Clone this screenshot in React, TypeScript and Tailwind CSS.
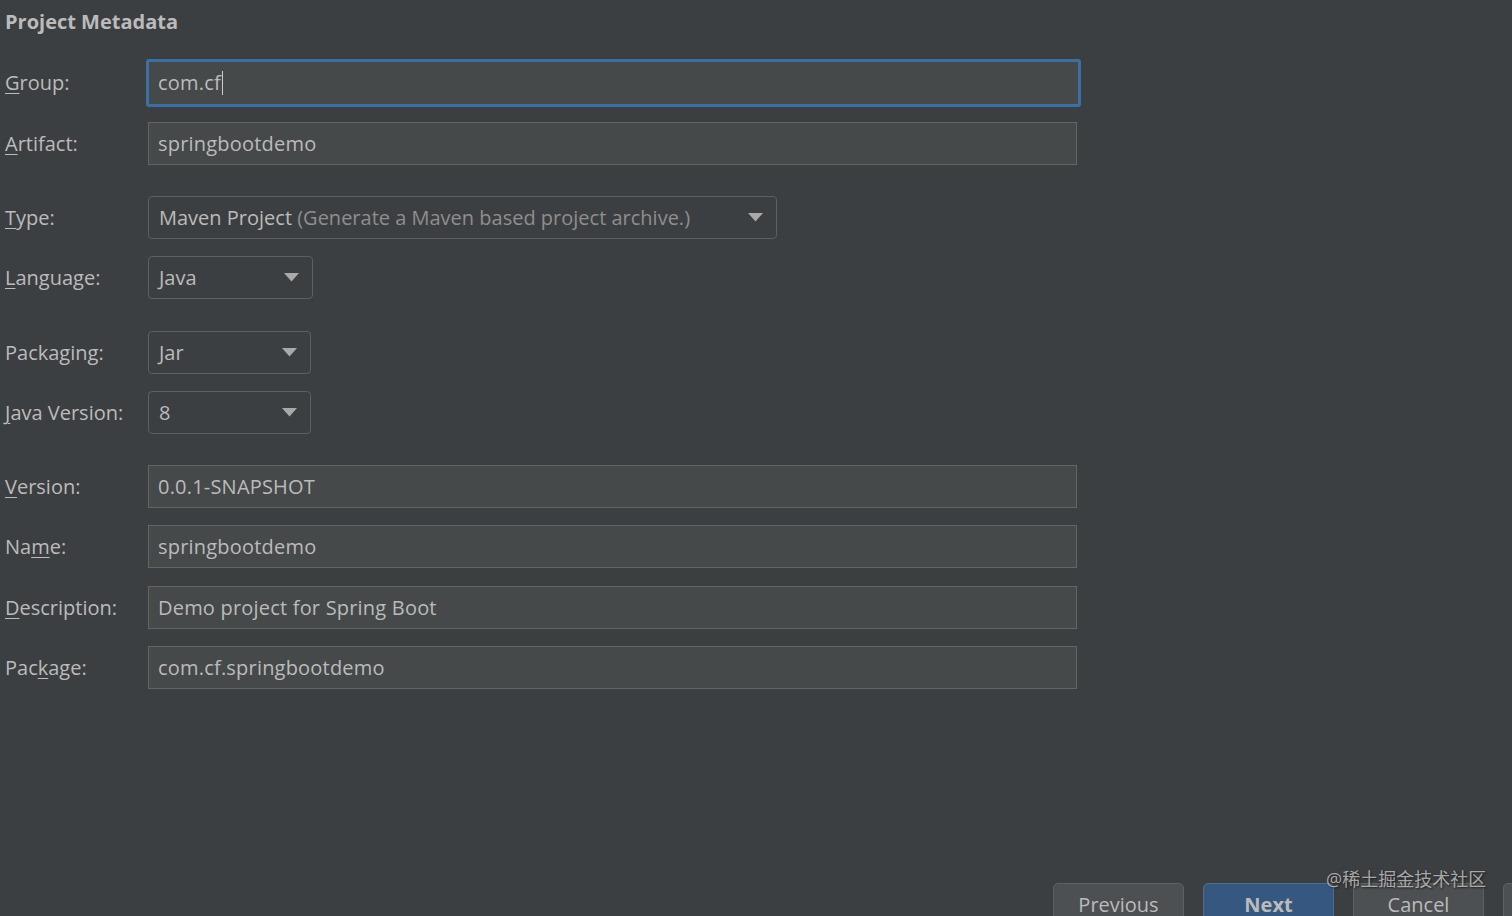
import React from "react";

const font = { fontFamily: '"Open Sans", "Noto Sans", "Noto Sans CJK SC", sans-serif' };

function Label({ text, mn }: { text: string; mn: number }) {
  return (
    <div className="w-[143px] shrink-0 pl-[5px] text-[20px] text-[#bbbbbb]">
      {text.slice(0, mn)}
      <span className="underline decoration-1 underline-offset-[3px]">{text[mn]}</span>
      {text.slice(mn + 1)}
    </div>
  );
}

function Arrow() {
  return (
    <svg width="15" height="9" viewBox="0 0 15 9" className="shrink-0">
      <path d="M0 0 H15 L7.5 8.5 Z" fill="#a9a9a9" />
    </svg>
  );
}

function TextRow({ label, mn, value, className = "" }: { label: string; mn: number; value: string; className?: string }) {
  return (
    <div className={`flex h-[43px] items-center ${className}`}>
      <Label text={label} mn={mn} />
      <div className="ml-[5px] flex h-[43px] w-[929px] items-center border border-[#646464] bg-[#45494a] pl-[9px] text-[20px] tracking-[0.2px] text-[#bbbbbb]">
        {value}
      </div>
    </div>
  );
}

function SelectRow({
  label,
  mn,
  width,
  className = "",
  children,
}: {
  label: string;
  mn: number;
  width: string;
  className?: string;
  children: React.ReactNode;
}) {
  return (
    <div className={`flex h-[43px] items-center ${className}`}>
      <Label text={label} mn={mn} />
      <div
        className={`ml-[5px] flex h-[43px] ${width} items-center justify-between rounded-[4px] border border-[#5e6060] bg-[#3c3f41] pl-[10px] pr-[13px] text-[20px] text-[#bbbbbb]`}
      >
        <span className="whitespace-nowrap">{children}</span>
        <Arrow />
      </div>
    </div>
  );
}

export default function App() {
  return (
    <div className="relative h-[916px] w-[1512px] overflow-hidden bg-[#3c3f41]" style={font}>
      <div className="flex flex-col">
        <div className="pl-[5px] pt-[8px] text-[20px] font-bold leading-[28px] text-[#bbbbbb]">Project Metadata</div>

        {/* Group, focused */}
        <div className="mt-[23px] flex h-[48px] items-center">
          <Label text="Group:" mn={0} />
          <div className="ml-[3px] flex h-[48px] w-[935px] items-center rounded-[3px] border-[3px] border-[#3d6fa3] bg-[#45494a] pl-[9px] text-[20px] tracking-[0.2px] text-[#bbbbbb]">
            com.cf
            <span className="ml-[1px] inline-block h-[24px] w-[1px] bg-[#cccccc]" />
          </div>
        </div>

        <TextRow label="Artifact:" mn={0} value="springbootdemo" className="mt-[15px]" />

        <SelectRow label="Type:" mn={0} width="w-[629px]" className="mt-[31px]">
          Maven Project <span className="text-[#8e8e8e]">(Generate a Maven based project archive.)</span>
        </SelectRow>
        <SelectRow label="Language:" mn={0} width="w-[165px]" className="mt-[17px]">
          Java
        </SelectRow>
        <SelectRow label="Packaging:" mn={5} width="w-[163px]" className="mt-[32px]">
          Jar
        </SelectRow>
        <SelectRow label="Java Version:" mn={0} width="w-[163px]" className="mt-[17px]">
          8
        </SelectRow>

        <TextRow label="Version:" mn={0} value="0.0.1-SNAPSHOT" className="mt-[31px]" />
        <TextRow label="Name:" mn={2} value="springbootdemo" className="mt-[17px]" />
        <TextRow label="Description:" mn={0} value="Demo project for Spring Boot" className="mt-[18px]" />
        <TextRow label="Package:" mn={3} value="com.cf.springbootdemo" className="mt-[17px]" />
      </div>

      {/* bottom buttons, cut off by the window edge */}
      <div className="absolute left-[1053px] top-[883px] flex gap-[19px]">
        <div className="flex h-[44px] w-[131px] items-start justify-center rounded-[5px] border border-[#5e6060] bg-[#4c5052] pt-[6px] text-[20px] text-[#bbbbbb]">
          Previous
        </div>
        <div className="flex h-[44px] w-[131px] items-start justify-center rounded-[5px] border border-[#4c708c] bg-[#365880] pt-[6px] text-[20px] font-bold text-[#bbbbbb]">
          Next
        </div>
        <div className="flex h-[44px] w-[131px] items-start justify-center rounded-[5px] border border-[#5e6060] bg-[#4c5052] pt-[6px] text-[20px] text-[#bbbbbb]">
          Cancel
        </div>
        <div className="h-[44px] w-[131px] rounded-[5px] border border-[#5e6060] bg-[#4c5052]" />
      </div>

      {/* watermark */}
      <div
        className="absolute left-[1326px] top-[866px] text-[18px] leading-[26px] text-[#c8c8c8]/80"
        style={{ textShadow: "1px 1px 2px rgba(0,0,0,0.6)" }}
      >
        @稀土掘金技术社区
      </div>
    </div>
  );
}
